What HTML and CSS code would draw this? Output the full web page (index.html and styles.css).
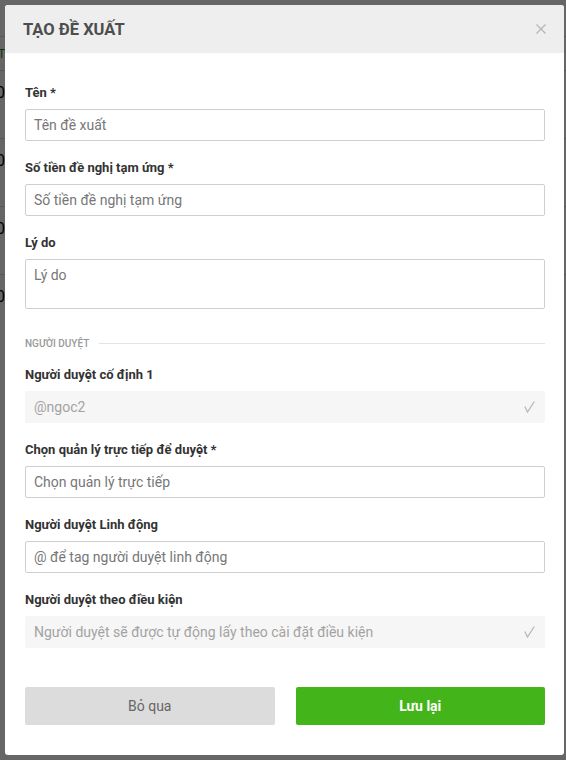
FILE: index.html
```html
<!DOCTYPE html>
<html lang="vi">
<head>
<meta charset="utf-8">
<title>Tạo đề xuất</title>
<link rel="stylesheet" href="styles.css">
</head>
<body>
<div class="page">
  <div class="page-head">T</div>
  <div class="page-row">0</div>
  <div class="page-row">0</div>
  <div class="page-row">0</div>
  <div class="page-row">0</div>
</div>
<div class="overlay">
  <div class="modal">
    <div class="modal-header">
      <h1 class="modal-title">TẠO ĐỀ XUẤT</h1>
      <button class="close" aria-label="Đóng">
        <svg width="10" height="10" viewBox="0 0 10 10"><path d="M0.5 0.5 L9.5 9.5 M9.5 0.5 L0.5 9.5" stroke="#b3b6ba" stroke-width="1.3" fill="none"/></svg>
      </button>
    </div>
    <div class="modal-body">
      <div class="group">
        <label class="label">Tên *</label>
        <div class="input"><span class="ph">Tên đề xuất</span></div>
      </div>
      <div class="group">
        <label class="label">Số tiền đề nghị tạm ứng *</label>
        <div class="input"><span class="ph">Số tiền đề nghị tạm ứng</span></div>
      </div>
      <div class="group">
        <label class="label">Lý do</label>
        <div class="input textarea"><span class="ph">Lý do</span></div>
      </div>
      <div class="section"><span class="section-title">NGƯỜI DUYỆT</span><span class="section-line"></span></div>
      <div class="group">
        <label class="label">Người duyệt cố định 1</label>
        <div class="input readonly"><span class="ro">@ngoc2</span>
          <svg class="check" width="11" height="12" viewBox="0 0 11 12"><path d="M0.8 5.5 L3.5 11 L10.3 0.5" stroke="#b8b8b8" stroke-width="1.3" fill="none"/></svg>
        </div>
      </div>
      <div class="group">
        <label class="label">Chọn quản lý trực tiếp để duyệt *</label>
        <div class="input"><span class="ph">Chọn quản lý trực tiếp</span></div>
      </div>
      <div class="group">
        <label class="label">Người duyệt Linh động</label>
        <div class="input"><span class="ph">@ để tag người duyệt linh động</span></div>
      </div>
      <div class="group">
        <label class="label">Người duyệt theo điều kiện</label>
        <div class="input readonly"><span class="ro">Người duyệt sẽ được tự động lấy theo cài đặt điều kiện</span>
          <svg class="check" width="11" height="12" viewBox="0 0 11 12"><path d="M0.8 5.5 L3.5 11 L10.3 0.5" stroke="#b8b8b8" stroke-width="1.3" fill="none"/></svg>
        </div>
      </div>
      <div class="footer">
        <button class="btn btn-cancel">Bỏ qua</button>
        <button class="btn btn-save">Lưu lại</button>
      </div>
    </div>
  </div>
</div>
</body>
</html>
```

FILE: styles.css
```css
* { box-sizing: border-box; }
html, body { margin: 0; padding: 0; }
body {
  font-family: Roboto, "Liberation Sans", Arial, sans-serif;
  background: #fff;
  width: 566px;
  height: 760px;
  overflow: hidden;
}
.page { padding-top: 36px; }
.page-head {
  height: 34px;
  border-top: 1px solid #ddd;
  color: #2e7d32;
  font-size: 12px;
  line-height: 34px;
  margin-left: -2px;
}
.page-row {
  height: 68px;
  border-top: 1px solid #ddd;
  font-size: 16px;
  line-height: 44px;
  color: #000;
  margin-left: -4px;
}
.overlay {
  position: fixed;
  inset: 0;
  background: rgba(0, 0, 0, 0.6);
  padding: 5px;
}
.modal {
  width: 559px;
  background: #fff;
  border-radius: 3px;
  overflow: hidden;
}
.modal-header {
  height: 48px;
  background: #eeeeee;
  display: flex;
  align-items: center;
  justify-content: space-between;
  padding: 0 17px 0 18px;
}
.modal-title {
  margin: 0;
  font-size: 16.5px;
  font-weight: 700;
  color: #4d4d4d;
}
.close {
  border: 0;
  background: none;
  padding: 0;
  width: 12px;
  height: 12px;
  display: flex;
  align-items: center;
  justify-content: center;
}
.modal-body {
  padding: 31px 19px 30px 20px;
  display: flex;
  flex-direction: column;
}
.group {
  display: flex;
  flex-direction: column;
  margin-bottom: 18px;
}
.label {
  font-size: 13px;
  font-weight: 700;
  line-height: 17px;
  color: #333;
  margin-bottom: 8px;
}
.input {
  height: 32px;
  border: 1px solid #cfcfcf;
  border-radius: 2px;
  padding: 0 8px;
  display: flex;
  align-items: center;
  font-size: 14px;
}
.ph { color: #777; }
.textarea {
  height: 50px;
  align-items: flex-start;
  padding-top: 7px;
}
.readonly {
  background: #f6f6f6;
  border-color: #f6f6f6;
  justify-content: space-between;
  padding-right: 9px;
}
.ro { color: #a3a3a3; }
.check { display: block; }
.section {
  display: flex;
  align-items: center;
  margin-top: 9px;
  margin-bottom: 16px;
  height: 14px;
}
.section-title {
  font-size: 10px;
  color: #999;
  font-weight: 500;
  margin-right: 10px;
  white-space: nowrap;
}
.section-line {
  flex: 1;
  height: 1px;
  background: #e3e3e3;
}
.footer {
  display: flex;
  gap: 21px;
  margin-top: 21px;
}
.btn {
  flex: 1;
  height: 38px;
  border: 0;
  border-radius: 2px;
  font-family: Roboto, "Liberation Sans", Arial, sans-serif;
  font-size: 14px;
}
.btn-cancel { background: #dcdcdc; color: #666; }
.btn-save { background: #43b51a; color: #fff; font-weight: 700; }
```
